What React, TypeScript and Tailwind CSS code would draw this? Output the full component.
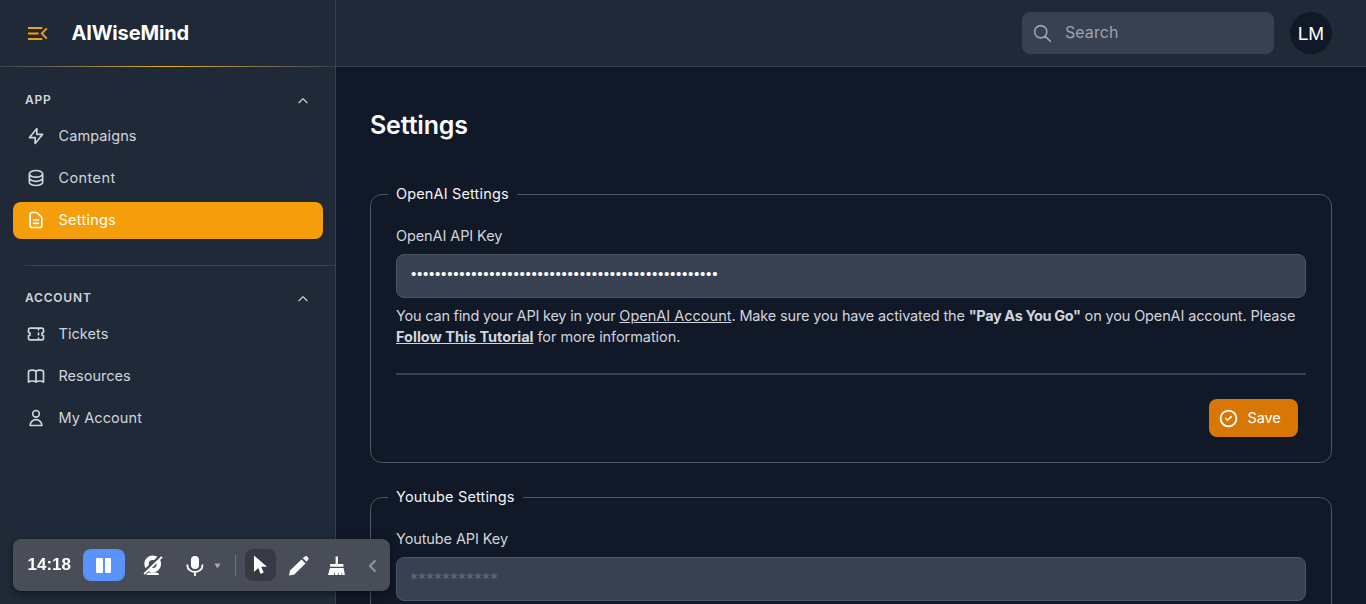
import React from "react";
import {
  HiOutlineLightningBolt,
  HiOutlineDatabase,
  HiOutlineDocumentText,
  HiOutlineTicket,
  HiOutlineBookOpen,
  HiOutlineUser,
  HiOutlineCheckCircle,
  HiOutlineSearch,
  HiOutlineChevronUp,
} from "react-icons/hi";

type Item = { label: string; icon: React.ElementType; spacing: string; active?: boolean };

const appItems: Item[] = [
  { label: "Campaigns", icon: HiOutlineLightningBolt, spacing: "tracking-[0.1px]" },
  { label: "Content", icon: HiOutlineDatabase, spacing: "tracking-[0.4px]" },
  { label: "Settings", icon: HiOutlineDocumentText, spacing: "tracking-[0.25px]", active: true },
];

const accountItems: Item[] = [
  { label: "Tickets", icon: HiOutlineTicket, spacing: "tracking-[0.05px]" },
  { label: "Resources", icon: HiOutlineBookOpen, spacing: "tracking-[0px]" },
  { label: "My Account", icon: HiOutlineUser, spacing: "tracking-[0.1px]" },
];

function NavGroup({ title, items }: { title: string; items: Item[] }) {
  return (
    <section>
      <div className="flex h-6 items-center justify-between pr-[25px] pl-[25px] text-[#d1d5db]">
        <h2 className="text-[12px] leading-none font-semibold tracking-[0.8px]">{title}</h2>
        <HiOutlineChevronUp className="mt-0.5 size-[14px]" />
      </div>
      <nav className="mt-[6px] flex flex-col gap-[5px] pr-3 pl-[13px]">
        {items.map(({ label, icon: Icon, spacing, active }) => (
          <a
            key={label}
            className={`flex h-[37px] items-center gap-[13px] rounded-lg pb-px pl-[12.5px] text-[14.5px] ${
              active ? "bg-[#f59e0b] text-white" : "text-[#d1d5db]"
            }`}
          >
            <Icon className="size-5" />
            <span className={`pb-px ${spacing}`}>{label}</span>
          </a>
        ))}
      </nav>
    </section>
  );
}

function Sidebar() {
  return (
    <aside className="flex w-[336px] shrink-0 flex-col border-r border-[#374151] bg-[#1f2937]">
      <div className="flex h-[66px] shrink-0 items-center pl-[28px]">
        <svg className="size-[20px]" viewBox="0 0 20 20" fill="none" stroke="#f59e0b" strokeWidth="2">
          <path d="M0 5h14.3M0 10.5h10.5M0 16h14.3" />
          <path d="M18.8 5.3L13.8 10.5L18.8 15.7" strokeWidth="1.9" />
        </svg>
        <span className="ml-[23.5px] text-[20px] font-bold tracking-[-0.15px] text-white">AIWiseMind</span>
      </div>
      <div className="h-px shrink-0 bg-linear-to-r from-[#374151] via-[#eab308] to-[#374151]" />
      <div className="pt-[21px]">
        <NavGroup title="APP" items={appItems} />
        <div className="mt-[26px] mb-[20px] ml-[25px] h-px bg-[#374151]" />
        <NavGroup title="ACCOUNT" items={accountItems} />
      </div>
    </aside>
  );
}

function Header() {
  return (
    <header className="flex h-[67px] shrink-0 items-center justify-end gap-4 border-b border-[#374151] bg-[#1f2937] pr-[34px]">
      <div className="flex h-[42px] w-[252px] items-center gap-3 rounded-lg bg-[#374151] pl-[10px] text-[#9ca3af]">
        <HiOutlineSearch className="size-[21px]" strokeWidth={1.8} />
        <span className="pb-0.5 text-[16px] tracking-[0.05px]">Search</span>
      </div>
      <div className="flex size-[42px] items-center justify-center rounded-full bg-[#111827] pt-0.5 font-['Liberation_Sans',sans-serif] text-[19px] text-white">
        LM
      </div>
    </header>
  );
}

function SettingsGroup({
  title,
  label,
  value,
  masked,
  children,
}: {
  title: string;
  label: string;
  value: string;
  masked?: boolean;
  children?: React.ReactNode;
}) {
  return (
    <fieldset className="min-w-0 rounded-xl border border-[#4b5563] px-[25px] pb-[25px]">
      <legend className="-ml-2 h-6 px-2 text-[14.5px] leading-6 tracking-[0.15px] text-[#f3f4f6]">{title}</legend>
      <label className="mt-[19px] block h-[22px] text-[14.5px] leading-[22px] tracking-[-0.1px] text-[#d1d5db]">
        {label}
      </label>
      <div
        className={`mt-[7px] flex h-[44px] items-center rounded-lg border border-[#4b5563] bg-[#374151] pl-[13px] ${
          masked
            ? "pb-1 text-[13px] tracking-[-1.29px] text-white"
            : "pb-px text-[16px] font-light tracking-[0px] text-[#6b7280]"
        }`}
      >
        {value}
      </div>
      {children}
    </fieldset>
  );
}

function RecorderBar() {
  return (
    <div className="fixed bottom-[13px] left-[13px] flex h-[52px] w-[377px] items-center rounded-lg bg-[#484d58] shadow-[0_2px_6px_rgba(0,0,0,0.5)]">
      <span className="ml-[14.5px] w-[45.5px] font-['Liberation_Sans',sans-serif] text-[17px] font-bold text-white">
        14:18
      </span>
      <div className="ml-[10px] flex h-8 w-[42px] items-center justify-center gap-[2px] rounded-lg bg-[#5b93fc] pr-px">
        <div className="h-[15px] w-[6.5px] rounded-[1px] bg-white" />
        <div className="h-[15px] w-[6.5px] rounded-[1px] bg-white" />
      </div>
      <svg className="ml-[17px] size-[22px]" viewBox="0 0 22 22">
        <circle cx="10.7" cy="10" r="6.2" fill="none" stroke="#fff" strokeWidth="4.4" />
        <path d="M4.6 21c0-2 2.4-2.7 6.2-2.7s6.2.7 6.2 2.7z" fill="#fff" />
        <path d="M2 15.8L17.6 0.8L19.6 2.9L3.6 18.6z" fill="#484d58" />
        <path d="M2.2 20L20 2.9" stroke="#fff" strokeWidth="2" />
      </svg>
      <svg className="ml-[19.5px] mt-px size-[22px]" viewBox="0 0 22 22" fill="none" stroke="#fff">
        <rect x="7" y="1" width="8" height="13" rx="4" fill="#fff" stroke="none" />
        <path d="M3.4 9.5v1.2a7.5 6.2 0 0 0 15 0V9.5M11 17v4" strokeWidth="1.8" />
      </svg>
      <svg className="ml-[8.5px] mt-0.5 h-[6px] w-[7px]" viewBox="0 0 7 6">
        <path d="M0.5 0.5h6L3.5 5.5z" fill="#a6a9b0" />
      </svg>
      <div className="ml-[14px] h-[21px] w-px bg-[#71757e]" />
      <div className="ml-[9px] flex h-8 w-[31px] items-center justify-center rounded-lg bg-[#373a42]">
        <svg className="h-5 w-[15px]" viewBox="0 0 15 20">
          <path d="M1 0.5V17l4.2-4.1 2.5 6 3-1.3-2.5-5.8H14z" fill="#fff" />
        </svg>
      </div>
      <svg className="ml-[12px] mt-px size-[22px]" viewBox="0 0 22 22" fill="#fff">
        <path d="M1 20.5l1-5L13.5 4.5l4 4L6.3 19.5zM14.8 3.3l2-1.8q1.2-1 2.3 0l1 1q1 1.2 0 2.3l-1.6 2z" />
      </svg>
      <svg className="ml-[17px] mt-px size-[20px]" viewBox="0 0 20 20" fill="#fff">
        <path d="M8.6 0.5h2.3v7.5h5.5v2.7H3.1V8h5.5zM3 12h13.6l1.3 7h-2.4l-.7-3-.2 3h-2.8l-.5-3-.5 3H8l-.2-3-1 3H1z" />
      </svg>
      <svg className="ml-[21px] mt-px h-[14px] w-[9px]" viewBox="0 0 9 14" fill="none" stroke="#8f939b" strokeWidth="2.2">
        <path d="M7.5 1.2L2 7l5.5 5.8" />
      </svg>
    </div>
  );
}

export default function App() {
  return (
    <div className="flex h-[604px] w-[1366px] overflow-hidden bg-[#111827] font-['Inter',sans-serif]">
      <Sidebar />
      <div className="flex min-w-0 flex-1 flex-col">
        <Header />
        <main className="px-[34px] pt-[42px]">
          <h1 className="mb-[41px] h-8 text-[25px] leading-8 font-semibold tracking-[-0.15px] text-[#f9fafb]">
            Settings
          </h1>
          <div className="flex flex-col gap-[22px]">
            <SettingsGroup title="OpenAI Settings" label="OpenAI API Key" value={"•".repeat(51)} masked>
              <div className="mt-[7px] text-[14.5px] leading-[21px] whitespace-nowrap text-[#d1d5db]">
                <p>
                  <span className="tracking-[-0.21px]">You can find your API key in your </span>
                  <a className="underline">OpenAI Account</a>
                  <span className="tracking-[-0.15px]">. Make sure you have activated the </span>
                  <strong className="tracking-[-0.38px]">"Pay As You Go"</strong>
                  <span className="tracking-[-0.14px]"> on you OpenAI account. Please</span>
                </p>
                <p>
                  <strong className="underline">Follow This Tutorial</strong>
                  <span className="tracking-[-0.07px]"> for more information.</span>
                </p>
              </div>
              <hr className="mt-[26px] border-t-2 border-[#374151]" />
              <div className="mt-6 flex justify-end pr-2">
                <button className="flex h-[38px] w-[89px] items-center gap-[8.5px] rounded-lg bg-[#d97706] pl-[9px] text-[14.5px] tracking-[-0.1px] text-white">
                  <HiOutlineCheckCircle className="size-[21px]" />
                  Save
                </button>
              </div>
            </SettingsGroup>
            <SettingsGroup title="Youtube Settings" label="Youtube API Key" value="***********" />
          </div>
        </main>
      </div>
      <RecorderBar />
    </div>
  );
}
